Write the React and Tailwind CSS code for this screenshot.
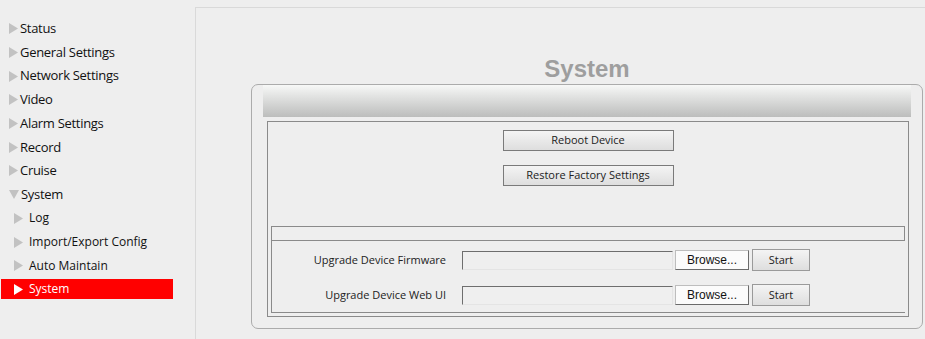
import React from 'react'

const font = { fontFamily: '"Open Sans", "Noto Sans", sans-serif' }

const menu = [
  { label: 'Status' },
  { label: 'General Settings' },
  { label: 'Network Settings' },
  { label: 'Video' },
  { label: 'Alarm Settings' },
  { label: 'Record' },
  { label: 'Cruise' },
  { label: 'System', open: true },
  { label: 'Log', sub: true },
  { label: 'Import/Export Config', sub: true },
  { label: 'Auto Maintain', sub: true },
  { label: 'System', sub: true, active: true },
]

function Arrow({ color = '#c2c2c2' }) {
  return (
    <svg width="9" height="11" viewBox="0 0 9 11" className="shrink-0">
      <path d="M0 0 L9 5.5 L0 11 Z" fill={color} />
    </svg>
  )
}

function DownArrow() {
  return (
    <svg width="10" height="9" viewBox="0 0 10 9" className="shrink-0">
      <path d="M0 0 L10 0 L5 9 Z" fill="#c2c2c2" />
    </svg>
  )
}

function MenuItem({ item }) {
  if (item.active) {
    return (
      <div className="h-[23.7px] flex items-center">
        <div className="ml-[1px] w-[172px] h-[20px] bg-[#ff0000] flex items-center pl-[13px] gap-[6px] text-white text-[12px]">
          <Arrow color="#ffffff" />
          <span>{item.label}</span>
        </div>
      </div>
    )
  }
  if (item.sub) {
    return (
      <div className="h-[23.7px] flex items-center pl-[14px] gap-[6px] text-[12px] text-[#111]">
        <Arrow />
        <span>{item.label}</span>
      </div>
    )
  }
  return (
    <div className="h-[23.7px] flex items-center pl-[9px] gap-[2px] text-[13px] text-[#111] tracking-[-0.3px]">
      {item.open ? <DownArrow /> : <Arrow />}
      <span>{item.label}</span>
    </div>
  )
}

function GrayButton({ children, className = '' }) {
  return (
    <button className={`border border-[#7a7a7a] bg-gradient-to-b from-[#f4f4f4] to-[#dedede] text-[11px] text-[#222] ${className}`}>
      {children}
    </button>
  )
}

function UpgradeRow({ label }) {
  return (
    <div className="flex items-center h-[22px]">
      <div className="w-[174px] text-right text-[11px] text-[#222]">{label}</div>
      <div className="ml-[16px] w-[211px] h-[19px] border-t border-l border-[#6e6e6e] border-b border-b-[#e4e4e4] border-r border-r-[#e4e4e4] bg-[#efefef]" />
      <button
        className="ml-[2px] w-[74px] h-[20px] bg-[#fbfbfb] border border-[#bdbdbd] border-b-[#6a6a6a] border-r-[#6a6a6a] text-[12px] text-[#111]"
        style={{ fontFamily: '"Liberation Sans", Arial, sans-serif' }}
      >
        Browse...
      </button>
      <GrayButton className="ml-[3px] w-[58px] h-[22px] border-[#9a9a9a] text-[10px]">Start</GrayButton>
    </div>
  )
}

export default function App() {
  return (
    <div className="w-[925px] h-[339px] bg-[#eeeeee] flex overflow-hidden" style={font}>
      <div className="w-[195px] shrink-0 pt-[17px]">
        {menu.map((m, i) => <MenuItem key={i} item={m} />)}
      </div>
      <div className="flex-1 mt-[7px] border-l border-t border-[#d9d9d9] pl-[55px] pr-[2px]">
        <div
          className="mt-[45px] h-[31px] leading-[31px] text-center text-[24px] font-bold text-[#9e9e9e]"
          style={{ fontFamily: '"Liberation Sans", Arial, sans-serif' }}
        >
          System
        </div>
        <div className="h-[245px] border border-[#ababab] rounded-[7px] px-[11px]">
          <div className="h-[32px] bg-gradient-to-b from-[#f7f8f7] to-[#bcbdbc]" />
          <div className="mt-[4px] ml-[4px] mr-[2px] h-[196px] border border-[#8a8a8a] px-[3px] pb-[3px] flex flex-col">
            <div className="flex flex-col items-center pt-[8px] gap-[14px]">
              <GrayButton className="w-[171px] h-[21px]">Reboot Device</GrayButton>
              <GrayButton className="w-[171px] h-[21px]">Restore Factory Settings</GrayButton>
            </div>
            <div className="mt-auto h-[87px] border border-[#8a8a8a] border-r-0">
              <div className="h-[14px] border-b border-[#8a8a8a] border-r" />
              <div className="pt-[8px] flex flex-col gap-[13px]">
                <UpgradeRow label="Upgrade Device Firmware" />
                <UpgradeRow label="Upgrade Device Web UI" />
              </div>
            </div>
          </div>
        </div>
      </div>
    </div>
  )
}
